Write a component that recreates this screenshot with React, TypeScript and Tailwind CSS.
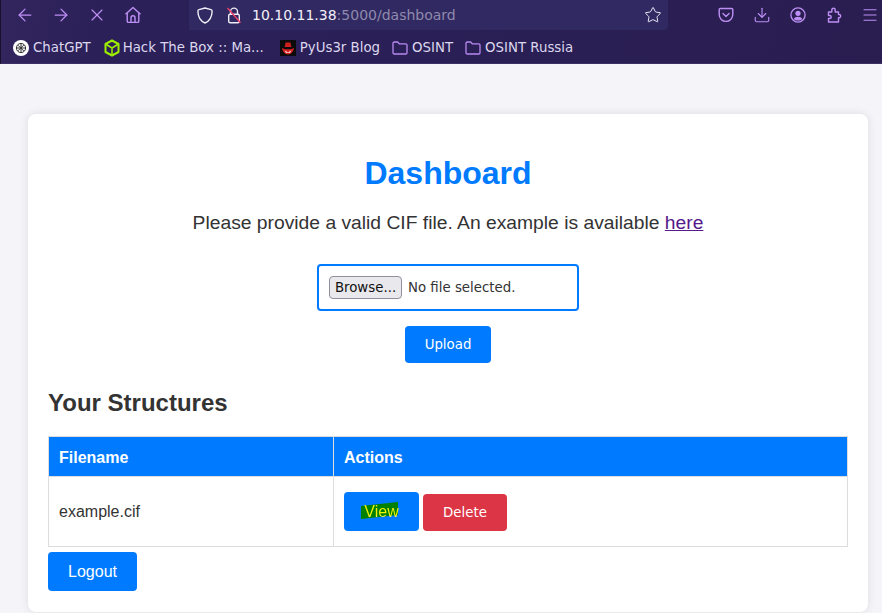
import { ArrowLeft, ArrowRight, Download, Menu, Star, X } from 'lucide-react'

const HomeIcon = () => (
  <svg width="18" height="18" viewBox="0 0 18 18" fill="none" stroke="currentColor" strokeWidth="1.4" strokeLinejoin="round">
    <path d="M1.500 8.300 9 1.600l7.500 6.700" />
    <path d="M3.200 7v8.200a1.200 1.200 0 0 0 1.200 1.200h9.200a1.200 1.200 0 0 0 1.200-1.200V7" />
    <path d="M7 16.400v-4.600a2 2 0 0 1 4 0v4.600" />
  </svg>
)

const ShieldIcon = () => (
  <svg width="16" height="17" viewBox="0 0 16 17" fill="none" stroke="#f0edf8" strokeWidth="1.4" strokeLinejoin="round">
    <path d="M8 1 2 2.600C1.200 2.800.9 3.300.9 4c0 6 2.600 10 7.100 12 4.500-2 7.100-6 7.100-12 0-.7-.3-1.200-1.100-1.400Z" />
  </svg>
)

const LockIcon = () => (
  <svg width="16" height="17" viewBox="0 0 16 17" fill="none" strokeWidth="1.4">
    <path d="M4.500 7V4.600a3.500 3.500 0 0 1 7 0V7" stroke="#f0edf8" />
    <rect x="2.700" y="7.200" width="10.600" height="8.600" rx="1.500" stroke="#f0edf8" />
    <path d="M1.500 1 14.500 15.800" stroke="#ef3f6a" />
  </svg>
)

const PocketIcon = () => (
  <svg width="16" height="16" viewBox="0 0 16 16" fill="none" stroke="currentColor" strokeWidth="1.4" strokeLinecap="round" strokeLinejoin="round">
    <path d="M2.300 1.500h11.400c.7 0 1.100.5 1.100 1.100v5a6.800 6.800 0 0 1-13.600 0v-5c0-.6.400-1.100 1.100-1.100Z" />
    <path d="m5 6.500 3 3 3-3" />
  </svg>
)

const AccountIcon = () => (
  <svg width="16" height="16" viewBox="0 0 16 16" fill="currentColor">
    <circle cx="8" cy="8" r="7.100" fill="none" stroke="currentColor" strokeWidth="1.300" />
    <circle cx="8" cy="6.300" r="2.600" />
    <path d="M3.800 12c.7-1.600 2.200-2.300 4.200-2.300s3.500.7 4.200 2.300c-1 1-2.500 1.600-4.200 1.600S4.800 13 3.800 12Z" />
  </svg>
)

const PuzzleIcon = () => (
  <svg width="16" height="16" viewBox="0 0 16 16" fill="none" stroke="currentColor" strokeWidth="1.400" strokeLinejoin="round">
    <path d="M2.500 15V11.500h1.200a1.500 1.500 0 0 0 0-3H2.500V5h3.300V3a1.700 1.700 0 0 1 3.400 0v2h3.300v2.500h.6a1.600 1.600 0 0 1 0 3.200h-.6V15Z" />
  </svg>
)

const FolderIcon = () => (
  <svg width="16" height="14" viewBox="0 0 16 14" fill="none" stroke="#b78af0" strokeWidth="1.300" strokeLinejoin="round">
    <path d="M1 2.300C1 1.500 1.500 1 2.300 1h3.300l1.600 1.800h6.500c.8 0 1.300.5 1.300 1.300v7.600c0 .8-.5 1.300-1.300 1.300H2.300c-.8 0-1.300-.5-1.300-1.300Z" />
  </svg>
)

const ChatGptIcon = () => (
  <span className="flex h-4 w-4 items-center justify-center rounded-full bg-white">
    <svg width="12" height="12" viewBox="0 0 12 12" fill="none" stroke="#333" strokeWidth="1">
      <circle cx="6" cy="6" r="4.600" />
      <path d="M3 3.200 8.800 9M3 8.800 8.800 3M6 1.500v9M1.500 6h9" />
    </svg>
  </span>
)

const HtbIcon = () => (
  <svg width="16" height="18" viewBox="0 0 16 18" fill="none" stroke="#9fef00" strokeWidth="2" strokeLinejoin="round">
    <path d="M8 1.500 14.500 5v8L8 16.500 1.500 13V5Z" />
    <path d="M1.500 5 8 9l6.500-4M8 9v7.500" strokeWidth="1.500" />
  </svg>
)

const PyusIcon = () => (
  <svg width="16" height="16" viewBox="0 0 16 16">
    <rect width="16" height="16" fill="#0b0b0b" />
    <path d="M5 6.500 5.500 2.500h5l.5 4 1.500.6H3.500Z" fill="#d3201f" />
    <path d="M2 8c1.500 1 3 1.300 6 1.300S12.500 9 14 8c-.2 3-3 6.500-6 6.500S2.200 11 2 8Z" fill="#d3201f" />
    <path d="M5 10.500 8 12.500l3-2-.8 2.300H5.800Z" fill="#fff" />
  </svg>
)

const Bookmark = ({ icon, label }: { icon: React.ReactNode; label: string }) => (
  <div className="flex items-center gap-1">
    <span className="flex w-4 shrink-0 items-center justify-center">{icon}</span>
    <span className="whitespace-nowrap">{label}</span>
  </div>
)

const NavSlot = ({ children }: { children: React.ReactNode }) => (
  <div className="flex h-[30px] w-9 shrink-0 items-center justify-center text-[#bd8ff5]">{children}</div>
)

const Toolbar = () => (
  <div className="h-16 overflow-hidden border-b border-l border-[#3b3166] border-l-[#16112e] bg-[linear-gradient(100deg,#33255e_0%,#2b2058_12%,#2a1f55_60%,#2a1d50_100%)] font-['DejaVu_Sans',sans-serif]">
    <div className="flex h-[30px] pl-[6px]">
      <NavSlot><ArrowLeft size={20} strokeWidth={1.5} /></NavSlot>
      <NavSlot><ArrowRight size={20} strokeWidth={1.5} /></NavSlot>
      <NavSlot><X size={20} strokeWidth={1.4} /></NavSlot>
      <NavSlot><HomeIcon /></NavSlot>
      <div className="ml-[38px] flex h-[30px] w-[479px] shrink-0 items-center rounded-br-[4px] bg-[#312962]">
        <div className="ml-2 flex w-4 justify-center"><ShieldIcon /></div>
        <div className="ml-[13px] flex w-4 justify-center"><LockIcon /></div>
        <div className="ml-[10px] whitespace-nowrap text-[14px] text-[#f3f0fa]">
          10.10.11.38<span className="text-[#8f89ad]">:5000/dashboard</span>
        </div>
        <div className="ml-auto mr-[6px] text-[#f0edf8]"><Star size={18} strokeWidth={1.3} /></div>
      </div>
      <div className="ml-[40px] flex">
        <NavSlot><PocketIcon /></NavSlot>
        <NavSlot><Download size={18} strokeWidth={1.5} /></NavSlot>
        <NavSlot><AccountIcon /></NavSlot>
        <NavSlot><PuzzleIcon /></NavSlot>
        <NavSlot><Menu size={18} strokeWidth={1.5} /></NavSlot>
      </div>
    </div>
    <div className="mt-[6px] flex h-6 items-center gap-3 pl-3 text-[13.330px] text-[#dcd7ee]">
      <Bookmark icon={<ChatGptIcon />} label="ChatGPT" />
      <div className="ml-px [&>div]:gap-[3px]"><Bookmark icon={<HtbIcon />} label="Hack The Box :: Ma..." /></div>
      <div className="ml-1"><Bookmark icon={<PyusIcon />} label="PyUs3r Blog" /></div>
      <Bookmark icon={<FolderIcon />} label="OSINT" />
      <Bookmark icon={<FolderIcon />} label="OSINT Russia" />
    </div>
  </div>
)

const App = () => {
  return (
    <div className="h-[613px] overflow-hidden bg-[#f4f4f9] font-['Liberation_Sans',Arial,sans-serif]">
      <Toolbar />
      <div className="pt-[50px] pl-7">
        <div className="w-[840px] rounded-lg bg-white px-5 pt-5 pb-[21px] shadow-[0_0_10px_rgba(0,0,0,0.1)]">
          <h1 className="mt-[19px] text-center text-[32px] leading-[40px] font-bold text-[#007bff]">Dashboard</h1>
          <p className="mt-[19px] text-center text-[19.270px] leading-[22px] text-[#333]">
            Please provide a valid CIF file. An example is available{' '}
            <a href="#" className="text-[#551a8b] underline">here</a>
          </p>
          <div className="mt-[30px] flex flex-col items-center">
            <div className="flex h-[47px] w-[262px] items-center rounded border-2 border-[#007bff] pl-[10px] font-['DejaVu_Sans',sans-serif] text-[13.330px]">
              <span className="flex h-[23px] w-[73px] items-center justify-center rounded-[4px] border border-[#8f8f9d] bg-[#e9e9ed] text-[#111]">Browse...</span>
              <span className="ml-[6px] text-[#333]">No file selected.</span>
            </div>
            <button className="mt-[15px] h-[37px] w-[86px] rounded bg-[#007bff] font-['DejaVu_Sans',sans-serif] text-[13.330px] text-white">Upload</button>
          </div>
          <h2 className="mt-[26px] text-[24px] leading-[28px] font-bold text-[#333]">Your Structures</h2>
          <table className="mt-[19px] w-full border-collapse text-[16px]">
            <thead>
              <tr className="h-10 bg-[#007bff] text-left font-bold text-white">
                <th className="w-[285px] border border-[#ddd] px-[10px] pt-[2px]">Filename</th>
                <th className="border border-[#ddd] px-[10px] pt-[2px]">Actions</th>
              </tr>
            </thead>
            <tbody>
              <tr className="h-[70px] text-[#333]">
                <td className="border border-[#ddd] px-[10px]">example.cif</td>
                <td className="border border-[#ddd] px-[10px]">
                  <div className="flex items-center gap-1">
                    <button className="relative flex h-[39px] w-[75px] items-center justify-center rounded bg-[#007bff] text-[16px] text-white">
                      <svg className="absolute top-[10px] left-[17px]" width="38" height="18" viewBox="0 0 38 18">
                        <polygon points="0,4 37,0 37,13 0,17" fill="#008000" />
                      </svg>
                      <span className="relative bg-[linear-gradient(180deg,#f2f200_62%,#ffffff_80%)] bg-clip-text text-transparent">View</span>
                    </button>
                    <button className="mt-[2px] h-[37px] w-[84px] rounded bg-[#dc3545] font-['DejaVu_Sans',sans-serif] text-[13.330px] text-white">Delete</button>
                  </div>
                </td>
              </tr>
            </tbody>
          </table>
          <button className="mt-[5px] block h-[39px] w-[89px] rounded bg-[#007bff] text-[16px] text-white">Logout</button>
        </div>
      </div>
    </div>
  )
}

export default App
